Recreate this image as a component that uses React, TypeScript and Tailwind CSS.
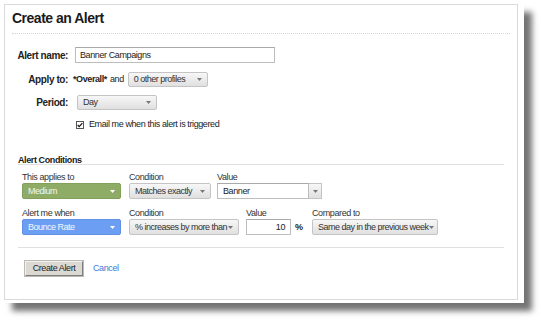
import React from "react";

type Variant = "gray" | "green" | "blue";

function Arrow({ white }: { white?: boolean }) {
  return (
    <svg width="5" height="3" viewBox="0 0 5 3" className="shrink-0">
      <path d="M0 0 L5 0 L2.5 3 Z" fill={white ? "#ffffff" : "#777777"} />
    </svg>
  );
}

function Select({
  text,
  w,
  h = 16,
  variant = "gray",
}: {
  text: string;
  w: string;
  h?: number;
  variant?: Variant;
}) {
  const base =
    variant === "green"
      ? "bg-[#8fac66] border-[#83a05b] text-[#f2f6ea]"
      : variant === "blue"
      ? "bg-[#6c9ff4] border-[#5f92e6] text-[#f3f7ff]"
      : "bg-gradient-to-b from-[#f7f7f7] to-[#e0e0e0] border-[#c4c4c4] text-[#333]";
  return (
    <div
      className={`${w} ${h === 15 ? "h-[15px]" : "h-[16px]"} ${base} border rounded-[2px] flex items-center justify-between pl-[5px] pr-[5px] text-[9px] tracking-[-0.5px] leading-none whitespace-nowrap overflow-hidden`}
    >
      <span>{text}</span>
      <Arrow white={variant !== "gray"} />
    </div>
  );
}

export default function App() {
  return (
    <div className="w-[541px] h-[321px] bg-white overflow-hidden font-['Liberation_Sans',Arial,sans-serif] text-[#222]">
      <div className="ml-[4px] mt-[4px] w-[520px] h-[299px] bg-white shadow-[8px_8px_6px_rgba(0,0,0,0.55)]">
        <div className="w-[514px] h-[296px] border border-[#d9d9de]">
          {/* Title */}
          <div className="mx-[7px] h-[29px] border-b border-dotted border-[#d4d4d4] pt-[5px]">
            <div className="text-[14px] tracking-[-0.5px] leading-[16px] font-bold text-[#1a1a1a]">Create an Alert</div>
          </div>

          {/* Form */}
          <div className="pl-[7px]">
            <div className="mt-[13px] flex items-center h-[16px]">
              <div className="w-[56px] text-right text-[10px] tracking-[-0.4px] font-bold whitespace-nowrap">Alert name:</div>
              <div className="ml-[7px] w-[200px] h-[16px] border border-[#bdbdbd] border-t-[#a9a9a9] bg-white flex items-center pl-[4px] text-[9px] tracking-[-0.4px] leading-none">
                Banner Campaigns
              </div>
            </div>

            <div className="mt-[9px] flex items-center h-[15px]">
              <div className="w-[56px] text-right text-[10px] tracking-[-0.4px] font-bold whitespace-nowrap">Apply to:</div>
              <div className="ml-[5px] text-[9px] tracking-[-0.4px] font-bold whitespace-nowrap">*Overall*</div>
              <div className="ml-[3px] text-[9px] tracking-[-0.4px] whitespace-nowrap">and</div>
              <div className="ml-[4px]">
                <Select text="0 other profiles" w="w-[80px]" h={15} />
              </div>
            </div>

            <div className="mt-[8px] flex items-center h-[15px]">
              <div className="w-[56px] text-right text-[10px] tracking-[-0.4px] font-bold whitespace-nowrap">Period:</div>
              <div className="ml-[9px]">
                <Select text="Day" w="w-[80px]" h={15} />
              </div>
            </div>

            <div className="mt-[10px] flex items-center h-[9px]">
              <div className="ml-[64px] w-[8px] h-[8px] border border-[#555] bg-white flex items-center justify-center">
                <svg width="7" height="6" viewBox="0 0 7 6">
                  <path d="M0.8 3 L2.6 4.9 L6.2 0.8" stroke="#111" strokeWidth="1.4" fill="none" />
                </svg>
              </div>
              <div className="ml-[5px] text-[9px] tracking-[-0.4px] leading-none whitespace-nowrap">
                Email me when this alert is triggered
              </div>
            </div>
          </div>

          {/* Alert Conditions */}
          <div className="mx-[13px] mt-[26px]">
            <div className="h-[10px] leading-[10px] border-b border-[#e0e0e0] text-[9px] tracking-[-0.4px] font-bold text-[#1a1a1a]">
              Alert Conditions
            </div>

            <div className="mt-[6px] pl-[4px] flex">
              <div className="flex flex-col w-[99px]">
                <div className="text-[9px] tracking-[-0.4px] leading-[12px] text-[#333]">This applies to</div>
                <Select text="Medium" w="w-[99px]" variant="green" />
              </div>
              <div className="flex flex-col ml-[8px]">
                <div className="text-[9px] tracking-[-0.4px] leading-[12px] text-[#333]">Condition</div>
                <Select text="Matches exactly" w="w-[82px]" />
              </div>
              <div className="flex flex-col ml-[6px]">
                <div className="text-[9px] tracking-[-0.4px] leading-[12px] text-[#333]">Value</div>
                <div className="flex h-[16px]">
                  <div className="w-[92px] h-[16px] border border-[#bdbdbd] border-t-[#a9a9a9] bg-white flex items-center pl-[5px] text-[9px] tracking-[-0.4px] leading-none">
                    Banner
                  </div>
                  <div className="w-[13px] h-[16px] border border-l-0 border-[#c4c4c4] bg-gradient-to-b from-[#f7f7f7] to-[#e0e0e0] flex items-center justify-center">
                    <Arrow />
                  </div>
                </div>
              </div>
            </div>

            <div className="mt-[8px] pl-[4px] flex">
              <div className="flex flex-col w-[99px]">
                <div className="text-[9px] tracking-[-0.4px] leading-[12px] text-[#333]">Alert me when</div>
                <Select text="Bounce Rate" w="w-[99px]" variant="blue" />
              </div>
              <div className="flex flex-col ml-[8px]">
                <div className="text-[9px] tracking-[-0.4px] leading-[12px] text-[#333]">Condition</div>
                <Select text="% increases by more than" w="w-[110px]" />
              </div>
              <div className="flex flex-col ml-[7px]">
                <div className="text-[9px] tracking-[-0.4px] leading-[12px] text-[#333]">Value</div>
                <div className="flex items-center h-[16px]">
                  <div className="w-[45px] h-[16px] border border-[#bdbdbd] border-t-[#a9a9a9] bg-white flex items-center justify-end pr-[5px] text-[9px] tracking-[-0.4px] leading-none">
                    10
                  </div>
                  <div className="ml-[4px] text-[9px] font-bold leading-none">%</div>
                </div>
              </div>
              <div className="flex flex-col ml-[9px]">
                <div className="text-[9px] tracking-[-0.4px] leading-[12px] text-[#333]">Compared to</div>
                <Select text="Same day in the previous week" w="w-[126px]" />
              </div>
            </div>

            <div className="mt-[12px] border-t border-[#e0e0e0]" />

            <div className="mt-[13px] pl-[7px] flex items-center">
              <div className="w-[58px] h-[15px] bg-[#dcd9d2] border border-t-[#f2f2f2] border-l-[#f2f2f2] border-b-[#7e7e7e] border-r-[#7e7e7e] shadow-[0_0_0_1px_#bdbab4] flex items-center justify-center text-[9px] tracking-[-0.4px] leading-none text-[#222]">
                Create Alert
              </div>
              <div className="ml-[10px] text-[9px] tracking-[-0.4px] leading-none text-[#3b7bd0]">Cancel</div>
            </div>
          </div>
        </div>
      </div>
    </div>
  );
}
